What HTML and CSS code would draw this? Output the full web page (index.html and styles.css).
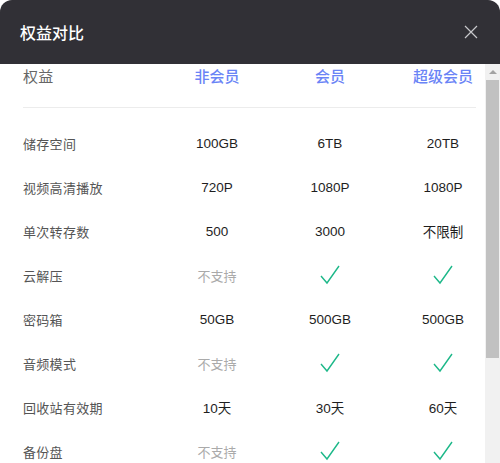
FILE: index.html
```html
<!DOCTYPE html>
<html lang="zh">
<head>
<meta charset="utf-8">
<link rel="stylesheet" href="styles.css">
</head>
<body>
<div class="dialog">
  <div class="header">
    <span class="title">权益对比</span>
    <svg class="close" width="14" height="14" viewBox="0 0 14 14"><path d="M1 1L13 13M13 1L1 13" stroke="#c8c8cc" stroke-width="1.2" fill="none"/></svg>
  </div>
  <div class="main">
    <div class="body">
      <div class="grid head">
        <div class="lbl">权益</div>
        <div class="col">非会员</div>
        <div class="col">会员</div>
        <div class="col">超级会员</div>
      </div>
      <div class="divider"></div>
      <div class="rows">
        <div class="grid row"><div class="lbl">储存空间</div><div class="col">100GB</div><div class="col">6TB</div><div class="col">20TB</div></div>
        <div class="grid row"><div class="lbl">视频高清播放</div><div class="col">720P</div><div class="col">1080P</div><div class="col">1080P</div></div>
        <div class="grid row"><div class="lbl">单次转存数</div><div class="col">500</div><div class="col">3000</div><div class="col">不限制</div></div>
        <div class="grid row"><div class="lbl">云解压</div><div class="col no">不支持</div><div class="col"><svg class="check" width="20" height="20" viewBox="0 0 20 20"><path d="M1 11L7 18L19 1" stroke="#1db889" stroke-width="1.4" fill="none"/></svg></div><div class="col"><svg class="check" width="20" height="20" viewBox="0 0 20 20"><path d="M1 11L7 18L19 1" stroke="#1db889" stroke-width="1.4" fill="none"/></svg></div></div>
        <div class="grid row"><div class="lbl">密码箱</div><div class="col">50GB</div><div class="col">500GB</div><div class="col">500GB</div></div>
        <div class="grid row"><div class="lbl">音频模式</div><div class="col no">不支持</div><div class="col"><svg class="check" width="20" height="20" viewBox="0 0 20 20"><path d="M1 11L7 18L19 1" stroke="#1db889" stroke-width="1.4" fill="none"/></svg></div><div class="col"><svg class="check" width="20" height="20" viewBox="0 0 20 20"><path d="M1 11L7 18L19 1" stroke="#1db889" stroke-width="1.4" fill="none"/></svg></div></div>
        <div class="grid row"><div class="lbl">回收站有效期</div><div class="col">10天</div><div class="col">30天</div><div class="col">60天</div></div>
        <div class="grid row"><div class="lbl">备份盘</div><div class="col no">不支持</div><div class="col"><svg class="check" width="20" height="20" viewBox="0 0 20 20"><path d="M1 11L7 18L19 1" stroke="#1db889" stroke-width="1.4" fill="none"/></svg></div><div class="col"><svg class="check" width="20" height="20" viewBox="0 0 20 20"><path d="M1 11L7 18L19 1" stroke="#1db889" stroke-width="1.4" fill="none"/></svg></div></div>
      </div>
    </div>
    <div class="scrollbar">
      <div class="sb-btn"><svg width="8" height="4" viewBox="0 0 8 4"><path d="M0 4L4 0L8 4Z" fill="#a3a3a3"/></svg></div>
      <div class="sb-thumb"></div>
    </div>
  </div>
</div>
</body>
</html>
```
FILE: styles.css
```css
html, body {
  margin: 0;
  padding: 0;
  background: #ffffff;
}
body {
  font-family: "Liberation Sans", "Noto Sans CJK SC", sans-serif;
  width: 500px;
  height: 463px;
  overflow: hidden;
}
.dialog {
  width: 500px;
  height: 463px;
  display: flex;
  flex-direction: column;
}
.header {
  height: 64px;
  flex: none;
  background: #313036;
  border-radius: 12px 12px 0 0;
  display: flex;
  align-items: center;
  justify-content: space-between;
  padding: 0 22px 0 20px;
  box-sizing: border-box;
}
.title {
  color: #ffffff;
  font-size: 16px;
  font-family: "Noto Sans CJK SC", sans-serif;
  font-weight: 500;
}
.close {
  display: block;
}
.main {
  flex: 1;
  display: flex;
  min-height: 0;
}
.body {
  flex: 1;
  overflow: hidden;
  padding: 0 9px 0 23px;
}
.scrollbar {
  width: 15px;
  flex: none;
  background: #f1f1f1;
  display: flex;
  flex-direction: column;
  align-items: center;
}
.sb-btn {
  height: 16px;
  width: 15px;
  display: flex;
  align-items: center;
  justify-content: center;
}
.sb-btn svg {
  display: block;
}
.sb-thumb {
  width: 13px;
  height: 278px;
  background: #c1c1c1;
}
.grid {
  display: grid;
  grid-template-columns: 1fr 66px 66px 66px;
  column-gap: 47px;
  align-items: center;
}
.head {
  height: 43px;
  align-items: start;
  padding-top: 1px;
  box-sizing: border-box;
}
.head .lbl {
  color: #666666;
  font-size: 15px;
  line-height: 22px;
  font-family: "Noto Sans CJK SC", sans-serif;
}
.head .col {
  color: #6a84f6;
  font-size: 15px;
  line-height: 22px;
  font-weight: 500;
  text-align: center;
  white-space: nowrap;
  font-family: "Noto Sans CJK SC", sans-serif;
}
.divider {
  height: 1px;
  background: #ececec;
}
.rows {
  padding-top: 13px;
}
.row {
  height: 44px;
}
.lbl {
  font-size: 13px;
  color: #555555;
  font-family: "Noto Sans CJK SC", sans-serif;
  letter-spacing: 0.3px;
}
.col {
  font-size: 13.5px;
  color: #1e1e1e;
  text-align: center;
  white-space: nowrap;
  display: flex;
  justify-content: center;
  align-items: center;
}
.col.no {
  color: #aaaaaa;
  font-size: 13px;
  font-family: "Noto Sans CJK SC", sans-serif;
}
.check {
  display: block;
}
```
